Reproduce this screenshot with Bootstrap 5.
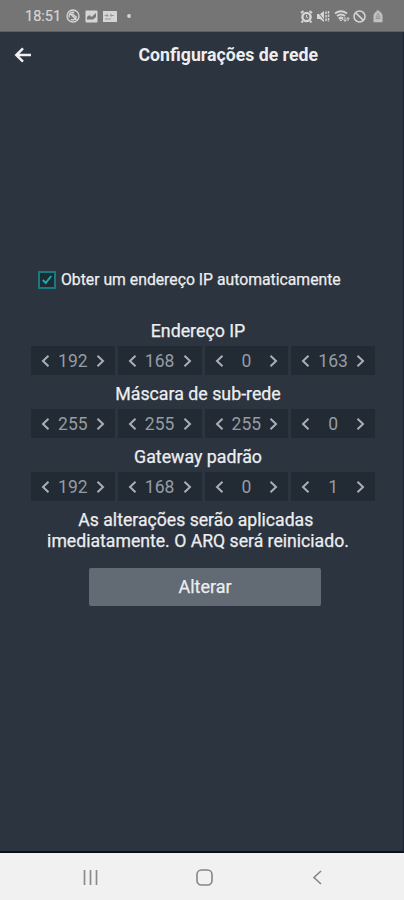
<!DOCTYPE html>
<html lang="pt-BR">
<head>
<meta charset="utf-8">
<meta name="viewport" content="width=device-width, initial-scale=1">
<title>Configurações de rede</title>
<link href="https://cdn.jsdelivr.net/npm/bootstrap@5.3.0/dist/css/bootstrap.min.css" rel="stylesheet">
<style>
body{font-family:Roboto,sans-serif;background:#2c343f;color:#eceef0;height:900px;overflow:hidden}
svg{display:block;flex:none}
.statusbar{height:32px;background:#757575;color:#d5d5d5;padding:1px 21px 0 25px;font-size:14.5px;border-bottom:1px solid #5d6064}
.clock{width:41px;padding-top:2px;-webkit-text-stroke:.2px}
.screen{border-right:1px solid #1b2430;border-bottom:2px solid #0b111a}
.titlebar{height:46px;padding-left:14px;padding-right:85px}
.titlebar h1{font-size:17.700px;font-weight:700;line-height:24px}
.settings{padding:192px 28px 0 31px;-webkit-text-stroke:.25px}
.auto-ip{height:20px;margin-left:7px;font-size:15.750px;gap:5px;margin-bottom:29px}
.tick{width:18px;height:18px;border:2px solid #187b7e;background:#1f2a34}
.field-title{font-size:17.800px;line-height:23px;height:27px;margin:0;font-weight:400;margin-left:-10px}
.octets{gap:3px;margin:0 0 7px}
.octet{height:29px;background:#222a34;color:#969ca3;padding:0 9px;font-size:17.500px;flex:1 1 0;-webkit-text-stroke:0}
.octet button{color:#a9afb5;width:11px}
.octet span{width:30px;white-space:nowrap;line-height:28px}
.notice{font-size:17.650px;line-height:21px;margin:9px 0 0 -10px}
.btn-apply{width:232px;height:38px;margin:16px 0 0 58px;background:#626a73;color:#eceef0;font-size:18px;border-radius:2px;line-height:1}
.btn-apply:hover{background:#6d757e;color:#fff}
.navkeys{height:47px;background:#f1f1f1;padding:1px 81px 0 82px}
.navkeys svg:nth-child(2){margin-right:2px}
</style>
<script src="https://cdn.jsdelivr.net/npm/bootstrap@5.3.0/dist/js/bootstrap.bundle.min.js"></script>
</head>
<body class="d-flex flex-column">
<svg width="0" height="0" class="position-absolute">
<defs>
<symbol id="prev" viewBox="0 0 11 14"><path d="M8.500 1.800 3 7l5.500 5.200" fill="none" stroke="currentColor" stroke-width="2"/></symbol>
<symbol id="next" viewBox="0 0 11 14"><path d="M2.500 1.800 8 7l-5.500 5.200" fill="none" stroke="currentColor" stroke-width="2"/></symbol>
</defs>
</svg>
<div class="statusbar d-flex align-items-center justify-content-between flex-shrink-0">
<div class="d-flex align-items-center">
<span class="clock text-nowrap">18:51</span>
<svg width="14" height="14" viewBox="0 0 14 14" fill="none" stroke="currentColor"><circle cx="7" cy="7" r="6" stroke-width="1.300"/><path d="M3.200 8.500a4 4 0 0 1 5-5M5 10.500a4 4 0 0 0 5.500-3M3.500 4l7 7M6 4.500 10 8" stroke-width="1.400"/></svg>
<svg style="margin-left:5px" width="13" height="13" viewBox="0 0 13 13"><rect x=".5" y=".5" width="12" height="12" rx="1" fill="currentColor"/><path d="M2 9.500V7l2.500-2 2 2L11 3v4L8 9.500z" fill="#777"/></svg>
<svg class="ms-1" width="16" height="13" viewBox="0 0 16 13"><path d="M1 1h13a1 1 0 0 1 1 1v10H1z" fill="currentColor"/><path d="M2.500 5.500h4M8 5.500h4M5 3.800v3.200M9 3.800v3M3 9h6" stroke="#999" fill="none"/></svg>
<svg class="ms-2" width="6" height="6" viewBox="0 0 6 6"><circle cx="3" cy="3" r="1.900" fill="currentColor"/></svg>
</div>
<div class="d-flex align-items-center">
<svg width="13" height="13" viewBox="0 0 13 13"><path d="m1 3 2.500-2M12 3 9.500 1M3 11l-1.500 1.500M10 11l1.500 1.500" stroke="currentColor" stroke-width="2"/><circle cx="6.500" cy="7" r="5.300" fill="currentColor"/><circle cx="6.500" cy="7" r="2.900" fill="#777"/><path d="M6.500 5v2.200L8 8" stroke="currentColor" fill="none"/></svg>
<svg class="ms-1" width="13" height="13" viewBox="0 0 13 13"><path d="M0 4h3l4-3v11L3 9H0z" fill="currentColor"/><path d="m0 1 8 10" stroke="#777"/><path d="M9 1.500v10M11.500 1v11" stroke="currentColor" stroke-width="1.500" stroke-dasharray="2.500 1"/></svg>
<svg class="ms-1" width="16" height="14" viewBox="0 0 16 14"><path d="M1 4.500Q7 0 13 4.500M3 7q4-3 8 0M5 9.200q2-1.500 4 0" stroke="currentColor" stroke-width="1.900" fill="none"/><path d="m7 12-2-2.500h4zM11 8v4M9.500 10.500 11 12.500l1.500-2M14 12V9M13 10l1-1.500 1.500 1.500" stroke="currentColor" fill="none"/></svg>
<svg style="margin-left:3px" width="13" height="13" viewBox="0 0 13 13" fill="none" stroke="currentColor" stroke-width="1.500"><circle cx="6.500" cy="6.500" r="5.500"/><path d="m2.600 2.600 7.800 7.800"/></svg>
<svg style="margin-left:7px" width="10" height="13" viewBox="0 0 10 13"><path d="M3.500.5h3v1.700H8l1.500 3v7H.5v-7l1.500-3h1.500z" fill="currentColor" opacity=".8"/><path d="M5 3.500 3 7h4zM2.500 8.500h5" stroke="#959595" fill="none"/></svg>
</div>
</div>
<main class="screen flex-grow-1">
<header class="titlebar d-flex align-items-center justify-content-between">
<button class="btn p-0 border-0 text-white" aria-label="Voltar"><svg width="18" height="18" viewBox="0 0 18 18"><path d="M17 9H2M9 2.300 2.300 9 9 15.700" fill="none" stroke="#eef0f2" stroke-width="2.500"/></svg></button>
<h1 class="m-0 text-nowrap">Configurações de rede</h1>
</header>
<div class="settings">
<div class="auto-ip d-flex align-items-center text-nowrap">
<div class="tick d-flex align-items-center justify-content-center" role="checkbox" aria-checked="true" aria-labelledby="auto"><svg width="12" height="12" viewBox="0 0 12 12"><path d="m1.800 6 2.900 3L10.200 2" fill="none" stroke="#24aaa9" stroke-width="2"/></svg></div>
<span id="auto">Obter um endereço IP automaticamente</span>
</div>
<h2 class="field-title text-center"><span>Endereço IP</span></h2>
<div class="octets d-flex">
<div class="octet d-flex align-items-center justify-content-between"><button class="btn p-0 border-0"><svg width="11" height="14"><use href="#prev"/></svg></button><span class="text-center">192</span><button class="btn p-0 border-0"><svg width="11" height="14"><use href="#next"/></svg></button></div>
<div class="octet d-flex align-items-center justify-content-between"><button class="btn p-0 border-0"><svg width="11" height="14"><use href="#prev"/></svg></button><span class="text-center">168</span><button class="btn p-0 border-0"><svg width="11" height="14"><use href="#next"/></svg></button></div>
<div class="octet d-flex align-items-center justify-content-between"><button class="btn p-0 border-0"><svg width="11" height="14"><use href="#prev"/></svg></button><span class="text-center">0</span><button class="btn p-0 border-0"><svg width="11" height="14"><use href="#next"/></svg></button></div>
<div class="octet d-flex align-items-center justify-content-between"><button class="btn p-0 border-0"><svg width="11" height="14"><use href="#prev"/></svg></button><span class="text-center">163</span><button class="btn p-0 border-0"><svg width="11" height="14"><use href="#next"/></svg></button></div>
</div>
<h2 class="field-title text-center"><span>Máscara de sub-rede</span></h2>
<div class="octets d-flex">
<div class="octet d-flex align-items-center justify-content-between"><button class="btn p-0 border-0"><svg width="11" height="14"><use href="#prev"/></svg></button><span class="text-center">255</span><button class="btn p-0 border-0"><svg width="11" height="14"><use href="#next"/></svg></button></div>
<div class="octet d-flex align-items-center justify-content-between"><button class="btn p-0 border-0"><svg width="11" height="14"><use href="#prev"/></svg></button><span class="text-center">255</span><button class="btn p-0 border-0"><svg width="11" height="14"><use href="#next"/></svg></button></div>
<div class="octet d-flex align-items-center justify-content-between"><button class="btn p-0 border-0"><svg width="11" height="14"><use href="#prev"/></svg></button><span class="text-center">255</span><button class="btn p-0 border-0"><svg width="11" height="14"><use href="#next"/></svg></button></div>
<div class="octet d-flex align-items-center justify-content-between"><button class="btn p-0 border-0"><svg width="11" height="14"><use href="#prev"/></svg></button><span class="text-center">0</span><button class="btn p-0 border-0"><svg width="11" height="14"><use href="#next"/></svg></button></div>
</div>
<h2 class="field-title text-center"><span>Gateway padrão</span></h2>
<div class="octets d-flex">
<div class="octet d-flex align-items-center justify-content-between"><button class="btn p-0 border-0"><svg width="11" height="14"><use href="#prev"/></svg></button><span class="text-center">192</span><button class="btn p-0 border-0"><svg width="11" height="14"><use href="#next"/></svg></button></div>
<div class="octet d-flex align-items-center justify-content-between"><button class="btn p-0 border-0"><svg width="11" height="14"><use href="#prev"/></svg></button><span class="text-center">168</span><button class="btn p-0 border-0"><svg width="11" height="14"><use href="#next"/></svg></button></div>
<div class="octet d-flex align-items-center justify-content-between"><button class="btn p-0 border-0"><svg width="11" height="14"><use href="#prev"/></svg></button><span class="text-center">0</span><button class="btn p-0 border-0"><svg width="11" height="14"><use href="#next"/></svg></button></div>
<div class="octet d-flex align-items-center justify-content-between"><button class="btn p-0 border-0"><svg width="11" height="14"><use href="#prev"/></svg></button><span class="text-center">1</span><button class="btn p-0 border-0"><svg width="11" height="14"><use href="#next"/></svg></button></div>
</div>
<p class="notice text-center text-nowrap">As alterações serão aplicadas&nbsp;<br>imediatamente. O ARQ será reiniciado.</p>
<button class="btn btn-apply border-0 p-0 d-block">Alterar</button>
</div>
</main>
<nav class="navkeys d-flex align-items-center justify-content-between flex-shrink-0">
<svg width="17" height="17" viewBox="0 0 17 17"><path d="M2.500 1v15M8.500 1v15M14.500 1v15" stroke="#8b8b8b" stroke-width="1.700"/></svg>
<svg width="17" height="17" viewBox="0 0 17 17"><rect x="1" y="1" width="15" height="15" rx="4.500" fill="none" stroke="#858585" stroke-width="1.600"/></svg>
<svg width="12" height="17" viewBox="0 0 12 17"><path d="M10 2 3 8.500l7 6.500" fill="none" stroke="#858585" stroke-width="1.600"/></svg>
</nav>
</body>
</html>
